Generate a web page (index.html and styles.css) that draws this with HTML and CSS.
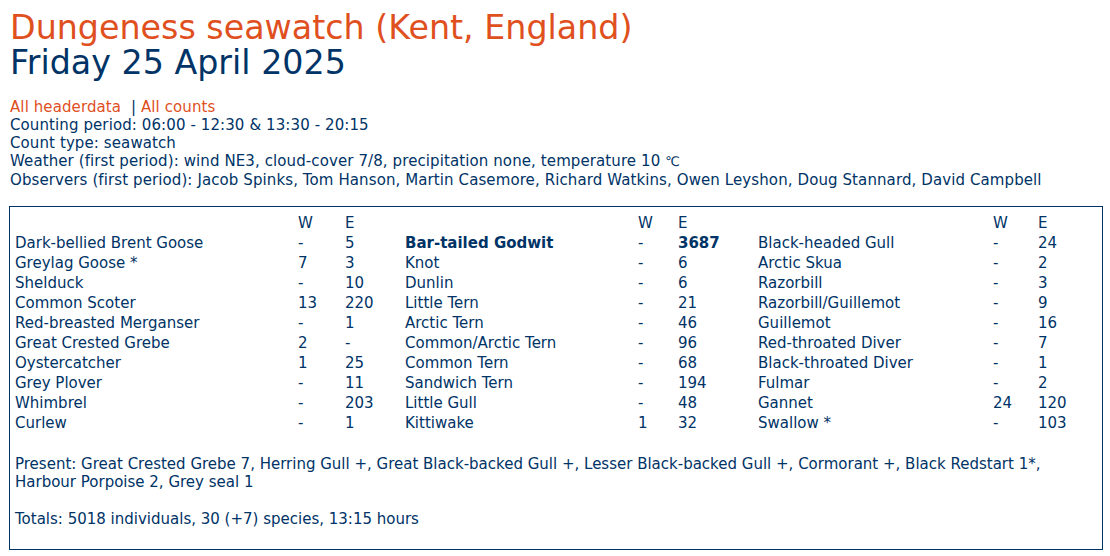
FILE: index.html
```html
<!DOCTYPE html>
<html lang="en">
<head>
<meta charset="utf-8">
<title>Dungeness seawatch</title>
<link rel="stylesheet" href="styles.css">
</head>
<body>
<header class="head">
  <h1 class="site">Dungeness seawatch (Kent, England)</h1>
  <h2 class="date">Friday 25 April 2025</h2>
</header>
<section class="meta">
  <div><a class="lnk" href="#">All headerdata</a>&nbsp; | <a class="lnk" href="#">All counts</a></div>
  <div>Counting period: 06:00 - 12:30 &amp; 13:30 - 20:15</div>
  <div>Count type: seawatch</div>
  <div>Weather (first period): wind NE3, cloud-cover 7/8, precipitation none, temperature 10 <span class="deg">&#8451;</span></div>
  <div>Observers (first period): Jacob Spinks, Tom Hanson, Martin Casemore, Richard Watkins, Owen Leyshon, Doug Stannard, David Campbell</div>
</section>
<section class="box">
  <table class="counts">
    <colgroup>
      <col class="c-n1"><col class="c-w1"><col class="c-e1">
      <col class="c-n2"><col class="c-w2"><col class="c-e2">
      <col class="c-n3"><col class="c-w3"><col class="c-e3">
    </colgroup>
    <tr><td></td><td>W</td><td>E</td><td></td><td>W</td><td>E</td><td></td><td>W</td><td>E</td></tr>
    <tr><td>Dark-bellied Brent Goose</td><td>-</td><td>5</td><td class="b">Bar-tailed Godwit</td><td>-</td><td class="b">3687</td><td>Black-headed Gull</td><td>-</td><td>24</td></tr>
    <tr><td>Greylag Goose *</td><td>7</td><td>3</td><td>Knot</td><td>-</td><td>6</td><td>Arctic Skua</td><td>-</td><td>2</td></tr>
    <tr><td>Shelduck</td><td>-</td><td>10</td><td>Dunlin</td><td>-</td><td>6</td><td>Razorbill</td><td>-</td><td>3</td></tr>
    <tr><td>Common Scoter</td><td>13</td><td>220</td><td>Little Tern</td><td>-</td><td>21</td><td>Razorbill/Guillemot</td><td>-</td><td>9</td></tr>
    <tr><td>Red-breasted Merganser</td><td>-</td><td>1</td><td>Arctic Tern</td><td>-</td><td>46</td><td>Guillemot</td><td>-</td><td>16</td></tr>
    <tr><td>Great Crested Grebe</td><td>2</td><td>-</td><td>Common/Arctic Tern</td><td>-</td><td>96</td><td>Red-throated Diver</td><td>-</td><td>7</td></tr>
    <tr><td>Oystercatcher</td><td>1</td><td>25</td><td>Common Tern</td><td>-</td><td>68</td><td>Black-throated Diver</td><td>-</td><td>1</td></tr>
    <tr><td>Grey Plover</td><td>-</td><td>11</td><td>Sandwich Tern</td><td>-</td><td>194</td><td>Fulmar</td><td>-</td><td>2</td></tr>
    <tr><td>Whimbrel</td><td>-</td><td>203</td><td>Little Gull</td><td>-</td><td>48</td><td>Gannet</td><td>24</td><td>120</td></tr>
    <tr><td>Curlew</td><td>-</td><td>1</td><td>Kittiwake</td><td>1</td><td>32</td><td>Swallow *</td><td>-</td><td>103</td></tr>
  </table>
  <p class="present">Present: Great Crested Grebe 7, Herring Gull +, Great Black-backed Gull +, Lesser Black-backed Gull +, Cormorant +, Black Redstart 1*, Harbour Porpoise 2, Grey seal 1</p>
  <p class="totals">Totals: 5018 individuals, 30 (+7) species, 13:15 hours</p>
</section>
</body>
</html>
```
FILE: styles.css
```css
html, body {
  margin: 0;
  padding: 0;
  background: #ffffff;
}
body {
  padding: 10px 7px 0 10px;
  font-family: "DejaVu Sans", sans-serif;
  font-size: 15px;
  line-height: 18px;
  color: #003366;
}
.head {
  margin: 0;
}
.site, .date {
  margin: 0;
  font-weight: normal;
  font-size: 33.3px;
  line-height: 35px;
}
.site {
  color: #e0501e;
}
.date {
  color: #003366;
}
.meta {
  margin-top: 18px;
  letter-spacing: 0.1px;
}
.lnk {
  color: #e0501e;
  text-decoration: none;
}
.deg {
  font-size: 13px;
}
.box {
  margin-top: 17px;
  margin-left: -1px;
  border: 1px solid #003366;
  padding: 6px 5px 21px 5px;
}
.counts {
  border-collapse: collapse;
  table-layout: fixed;
  width: 100%;
}
.counts td {
  padding: 0;
  height: 20px;
  line-height: 20px;
  white-space: nowrap;
  vertical-align: middle;
}
.c-n1 { width: 283px; }
.c-w1 { width: 47px; }
.c-e1 { width: 60px; }
.c-n2 { width: 233px; }
.c-w2 { width: 40px; }
.c-e2 { width: 80px; }
.c-n3 { width: 235px; }
.c-w3 { width: 45px; }
.c-e3 { width: auto; }
.b {
  font-weight: bold;
}
.present {
  margin: 22px 0 0 0;
}
.totals {
  margin: 19px 0 0 0;
}
```
